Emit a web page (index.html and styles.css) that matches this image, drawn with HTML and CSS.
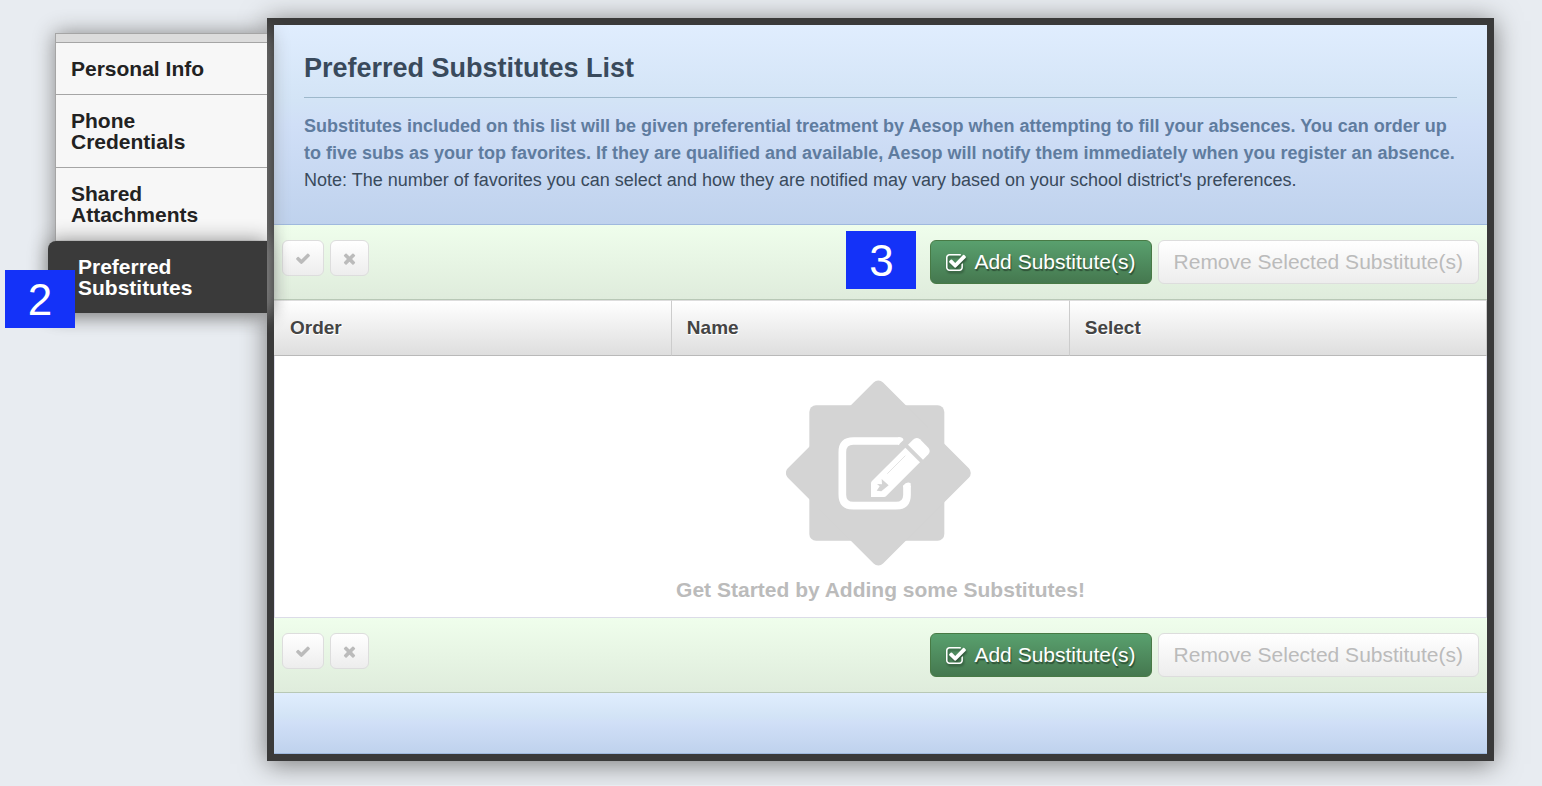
FILE: index.html
```html
<!DOCTYPE html>
<html lang="en">
  <head>
    <meta charset="UTF-8" />
    <meta name="viewport" content="width=device-width, initial-scale=1.0" />
    <title>Preferred Substitutes List</title>
    <link rel="stylesheet" href="styles.css">
  </head>
  <body>
    <!-- shared icons -->
    <svg class="icon-defs" aria-hidden="true">
      <symbol id="icon-check" viewBox="0 0 1792 1792">
        <path d="M1671 566q0 40-28 68l-724 724-136 136q-28 28-68 28t-68-28l-136-136-362-362q-28-28-28-68t28-68l136-136q28-28 68-28t68 28l294 295 656-657q28-28 68-28t68 28l136 136q28 28 28 68z" />
      </symbol>
      <symbol id="icon-times" viewBox="256 0 1280 1792">
        <path d="M1490 1322q0 40-28 68l-136 136q-28 28-68 28t-68-28l-294-294-294 294q-28 28-68 28t-68-28l-136-136q-28-28-28-68t28-68l294-294-294-294q-28-28-28-68t28-68l136-136q28-28 68-28t68 28l294 294 294-294q28-28 68-28t68 28l136 136q28 28 28 68t-28 68l-294 294 294 294q28 28 28 68z" />
      </symbol>
      <symbol id="icon-check-square" viewBox="64 128 1664 1408">
        <path d="M1472 930v318q0 119-84.500 203.500t-203.500 84.500h-832q-119 0-203.500-84.500t-84.500-203.500v-832q0-119 84.500-203.500t203.500-84.500h832q63 0 117 25 15 7 18 23 3 17-9 29l-49 49q-10 10-23 10-3 0-9-2-23-6-45-6h-832q-66 0-113 47t-47 113v832q0 66 47 113t113 47h832q66 0 113-47t47-113v-254q0-13 9-22l64-64q10-10 23-10 6 0 12 3 20 8 20 29zm231-489l-814 814q-24 24-57 24t-57-24l-430-430q-24-24-24-57t24-57l110-110q24-24 57-24t57 24l263 263 647-647q24-24 57-24t57 24l110 110q24 24 24 57t-24 57z" />
      </symbol>
    </svg>

    <div class="page">
      <nav class="side-nav">
        <ul class="tabs">
          <li><a href="#">Personal Info</a></li>
          <li><a href="#">Phone Credentials</a></li>
          <li><a href="#">Shared Attachments</a></li>
          <li class="active">
            <a href="#">Preferred Substitutes</a>
            <span class="step step-tab">2</span>
          </li>
        </ul>
      </nav>

      <main class="panel">
        <header class="panel-header">
          <h1>Preferred Substitutes List</h1>
          <p>
            <strong>Substitutes included on this list will be given preferential treatment by Aesop when attempting to fill your absences. You can order up to five subs as your top favorites. If they are qualified and available, Aesop will notify them immediately when you register an absence.</strong>
            Note: The number of favorites you can select and how they are notified may vary based on your school district's preferences.
          </p>
        </header>

        <div class="toolbar">
          <button class="btn btn-small" aria-label="Select all" disabled><svg><use href="#icon-check" /></svg></button>
          <button class="btn btn-small btn-clear" aria-label="Select none" disabled><svg><use href="#icon-times" /></svg></button>
          <div class="toolbar-right">
            <span class="step step-add">3</span>
            <button class="btn btn-add"><svg><use href="#icon-check-square" /></svg>Add Substitute(s)</button>
            <button class="btn" disabled>Remove Selected Substitute(s)</button>
          </div>
        </div>

        <table class="subs">
          <thead>
            <tr>
              <th>Order</th>
              <th>Name</th>
              <th class="col-select">Select</th>
            </tr>
          </thead>
          <tbody>
            <tr>
              <td class="empty" colspan="3">
                <svg class="empty-icon" viewBox="48 30 570 558">
                  <g fill="#d4d4d4">
                    <rect x="118" y="106" width="405" height="406" rx="20" />
                    <rect x="123" y="107" width="404" height="404" rx="20" transform="rotate(45 325 309)" />
                  </g>
                  <!-- note outline -->
                  <path d="M388 213H250Q217 213 217 246V374Q217 407 250 407H378Q411 407 411 374V347" fill="none" stroke="#fff" stroke-width="23" />
                  <path d="M385 201Q402 202 400 211L384 226ZM399 347Q411 333 422 340V352H399Z" fill="#fff" />
                  <!-- pencil -->
                  <path d="M406 233L450 277L348 379Q346 381 342 381H303V340Q303 336 306 333Z" fill="#fff" />
                  <path d="M414 224L429 209Q439 199 450 208L475 233Q483 243 475 253L459 269Z" fill="#fff" />
                  <path d="M352 311L406 257" stroke="#d4d4d4" stroke-width="2" fill="none" />
                  <path d="M335 327L356 346L334 364L320 362L329 349L321 342L336 343Z" fill="#d4d4d4" />
                </svg>
                <p>Get Started by Adding some Substitutes!</p>
              </td>
            </tr>
          </tbody>
        </table>

        <div class="toolbar">
          <button class="btn btn-small" aria-label="Select all" disabled><svg><use href="#icon-check" /></svg></button>
          <button class="btn btn-small btn-clear" aria-label="Select none" disabled><svg><use href="#icon-times" /></svg></button>
          <div class="toolbar-right">
            <button class="btn btn-add"><svg><use href="#icon-check-square" /></svg>Add Substitute(s)</button>
            <button class="btn" disabled>Remove Selected Substitute(s)</button>
          </div>
        </div>

        <footer class="panel-footer"></footer>
      </main>
    </div>
  </body>
</html>
```
FILE: styles.css
```css
* {
  box-sizing: border-box;
}

body {
  margin: 0;
  background: #e8ecf1;
  color: #222;
  font-family: "Liberation Sans", Arial, Helvetica, sans-serif;
}

.icon-defs {
  display: none;
}

.page {
  display: flex;
  align-items: flex-start;
  padding: 18px 48px 24px;
}

/* side tabs */
.side-nav {
  position: relative;
  z-index: 1;
  flex: 0 0 219px;
  padding: 15px 0 0 7px;
}

.tabs {
  list-style: none;
  margin: 0;
  padding: 8px 0 0;
  background: #dcdcdc;
  border-top: 1px solid #a5a5a5;
  border-left: 1px solid #a5a5a5;
  box-shadow: 0 0 20px #888;
}

.tabs li {
  border-top: 1px solid #a5a5a5;
}

.tabs a {
  display: block;
  padding: 15px 60px 15px 15px;
  background: #f7f7f7;
  color: #222;
  font-size: 21px;
  font-weight: bold;
  line-height: 21px;
  text-decoration: none;
}

.tabs .active {
  position: relative;
  margin-left: -8px;
  border-top-color: transparent;
}

.tabs .active a {
  padding-left: 30px;
  background: #3a3a3a;
  border-radius: 8px 0 0 0;
  box-shadow: 0 0 20px #888;
  color: #fff;
}

/* numbered callouts */
.step {
  position: absolute;
  width: 70px;
  height: 58px;
  background: #1432f8;
  color: #fff;
  font-size: 44px;
  line-height: 60px;
  text-align: center;
}

.step-tab {
  top: 29px;
  left: -43px;
}

.step-add {
  top: -9px;
  left: -84px;
}

/* main panel */
.panel {
  flex: 1;
  min-width: 0;
  background: #fff;
  border: 7px solid #3a3a3a;
  box-shadow: 0 3px 25px #777;
}

.panel-header {
  padding: 30px;
  background: linear-gradient(#e0edfe, #d3e4f6 38%, #d0dff7 50%, #bfd2ed);
  border-bottom: 1px solid #9fb9de;
  color: #394a5c;
}

.panel-header h1 {
  margin: 0 0 15px;
  padding-bottom: 15px;
  border-bottom: 1px solid #9db8cb;
  font-size: 27px;
  line-height: 27px;
}

.panel-header p {
  margin: 0;
  font-size: 18px;
  line-height: 27px;
}

.panel-header strong {
  display: block;
  color: #5f7c9f;
}

.toolbar {
  display: flex;
  align-items: flex-start;
  gap: 6px;
  padding: 15px 8px;
  background: linear-gradient(#effeec, #dfecdc);
  border-bottom: 1px solid #b8c8b6;
}

.toolbar-right {
  position: relative;
  display: flex;
  gap: 6px;
  margin-left: auto;
}

.btn {
  display: flex;
  align-items: center;
  gap: 8px;
  height: 44px;
  padding: 0 15px;
  background: linear-gradient(#fff, #ededed);
  border: 1px solid #ddd;
  border-radius: 6px;
  color: #bbb;
  font-family: inherit;
  font-size: 21px;
  white-space: nowrap;
}

.btn svg {
  width: 20px;
  height: 17px;
  fill: currentColor;
}

.btn-small {
  height: 36px;
  padding: 0 12px;
}

.btn-small svg {
  width: 16px;
}

.btn-clear svg {
  width: 13px;
}

.btn-add {
  background: linear-gradient(#59a06e, #45784f);
  border-color: #487a45;
  color: #fff;
  text-shadow: 1px 2px 1px rgba(0, 0, 0, 0.4);
  cursor: pointer;
}

.btn-add svg {
  filter: drop-shadow(1px 2px 1px rgba(0, 0, 0, 0.4));
}

/* substitutes table */
.subs {
  width: 100%;
  border-collapse: separate;
  border-spacing: 0;
  table-layout: fixed;
}

.subs th {
  padding: 15px;
  background: linear-gradient(#fff, #dedede);
  border-top: 1px solid #ddd;
  border-right: 1px solid #ccc;
  border-bottom: 1px solid #b9b9b9;
  color: #444;
  font-size: 19px;
  line-height: 24px;
  text-align: left;
  text-shadow: 0 1px 0 #fff, 1px 1px 0 #fff;
}

.subs th:first-child {
  padding-left: 16px;
}

.subs .col-select {
  width: 34.4%;
}

.empty {
  padding: 24px 0 15px;
  border: 1px solid #dcdce8;
  border-top: 0;
  color: #bbb;
  text-align: center;
}

.empty-icon {
  display: block;
  width: 190px;
  height: 186px;
  margin: 0 auto;
}

.empty p {
  margin: 12px 0 0;
  font-size: 21px;
  font-weight: bold;
  line-height: 24px;
}

.panel-footer {
  height: 61px;
  background: linear-gradient(#e0edfe, #d3e4f6 38%, #d0dff7 50%, #bfd2ed);
  border-bottom: 1px solid #9fb9de;
}
```
